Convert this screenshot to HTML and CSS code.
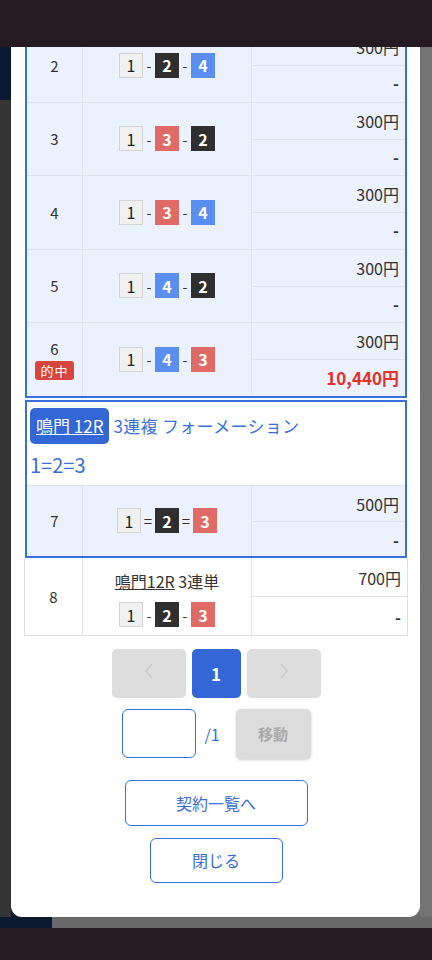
FILE: index.html
```html
<!DOCTYPE html>
<html lang="ja">

<head>
    <meta charset="utf-8">
    <meta name="viewport" content="width=device-width, initial-scale=1.0">
    <title>購入内容</title>
    <link rel="stylesheet" href="styles.css">
</head>

<body>

    <div class="statusbar"></div>

    <main class="stage">
        <div class="side side-left"></div>

        <section class="modal">
            <div class="scroll">

                <div class="group group-top">
                    <div class="row">
                        <div class="cell no">2</div>
                        <div class="cell combo">
                            <div class="nums"><span class="n n1">1</span><span class="sep">-</span><span class="n n2">2</span><span class="sep">-</span><span class="n n4">4</span></div>
                        </div>
                        <div class="cell money">
                            <div class="amt">300円</div>
                            <div class="pay">-</div>
                        </div>
                    </div>
                    <div class="row">
                        <div class="cell no">3</div>
                        <div class="cell combo">
                            <div class="nums"><span class="n n1">1</span><span class="sep">-</span><span class="n n3">3</span><span class="sep">-</span><span class="n n2">2</span></div>
                        </div>
                        <div class="cell money">
                            <div class="amt">300円</div>
                            <div class="pay">-</div>
                        </div>
                    </div>
                    <div class="row">
                        <div class="cell no">4</div>
                        <div class="cell combo">
                            <div class="nums"><span class="n n1">1</span><span class="sep">-</span><span class="n n3">3</span><span class="sep">-</span><span class="n n4">4</span></div>
                        </div>
                        <div class="cell money">
                            <div class="amt">300円</div>
                            <div class="pay">-</div>
                        </div>
                    </div>
                    <div class="row">
                        <div class="cell no">5</div>
                        <div class="cell combo">
                            <div class="nums"><span class="n n1">1</span><span class="sep">-</span><span class="n n4">4</span><span class="sep">-</span><span class="n n2">2</span></div>
                        </div>
                        <div class="cell money">
                            <div class="amt">300円</div>
                            <div class="pay">-</div>
                        </div>
                    </div>
                    <div class="row">
                        <div class="cell no">
                            <span>6</span>
                            <span class="hit">的中</span>
                        </div>
                        <div class="cell combo">
                            <div class="nums"><span class="n n1">1</span><span class="sep">-</span><span class="n n4">4</span><span class="sep">-</span><span class="n n3">3</span></div>
                        </div>
                        <div class="cell money">
                            <div class="amt">300円</div>
                            <div class="pay win">10,440円</div>
                        </div>
                    </div>
                </div>

                <div class="group group-form">
                    <div class="form-head">
                        <div class="head-line">
                            <a class="race-tag">鳴門 12R</a>
                            <span class="bet-type">3連複 フォーメーション</span>
                        </div>
                        <div class="form-nums">1=2=3</div>
                    </div>
                    <div class="row row-7">
                        <div class="cell no">7</div>
                        <div class="cell combo">
                            <div class="nums"><span class="n n1">1</span><span class="sep eq">=</span><span class="n n2">2</span><span class="sep eq">=</span><span class="n n3">3</span></div>
                        </div>
                        <div class="cell money">
                            <div class="amt">500円</div>
                            <div class="pay">-</div>
                        </div>
                    </div>
                </div>

                <div class="row row-plain">
                    <div class="cell no">8</div>
                    <div class="cell combo">
                        <div class="race-name"><u>鳴門12R</u> 3連単</div>
                        <div class="nums"><span class="n n1">1</span><span class="sep">-</span><span class="n n2">2</span><span class="sep">-</span><span class="n n3">3</span></div>
                    </div>
                    <div class="cell money">
                        <div class="amt amt-tall">700円</div>
                        <div class="pay pay-tall">-</div>
                    </div>
                </div>

                <nav class="pager">
                    <button class="pg pg-arrow">
                        <svg width="10" height="18" viewBox="0 0 10 18"><polyline points="8,2 2,9 8,16" fill="none" stroke="#c9c9c9" stroke-width="1.4"/></svg>
                    </button>
                    <button class="pg pg-current">1</button>
                    <button class="pg pg-arrow">
                        <svg width="10" height="18" viewBox="0 0 10 18"><polyline points="2,2 8,9 2,16" fill="none" stroke="#c9c9c9" stroke-width="1.4"/></svg>
                    </button>
                </nav>

                <div class="jump">
                    <input class="jump-input" type="text">
                    <span class="jump-total">/1</span>
                    <button class="jump-btn">移動</button>
                </div>

                <div class="actions">
                    <button class="btn-outline btn-list">契約一覧へ</button>
                    <button class="btn-outline btn-close">閉じる</button>
                </div>

            </div>
        </section>

        <div class="side side-right"></div>
    </main>

    <div class="navbar"></div>

</body>

</html>
```

FILE: styles.css
```css
* {
    box-sizing: border-box;
}

body {
    margin: 0;
    font-family: "Noto Sans CJK JP", "Noto Sans", sans-serif;
    color: #333;
    background: #241b22;
}

.statusbar {
    height: 47px;
    background: #241b22;
}

.navbar {
    height: 32px;
    background: #241b22;
}

.stage {
    display: grid;
    grid-template-columns: 11px 409px 12px;
    height: 881px;
    background: linear-gradient(to right, #0b1a31 52px, #6a6a6a 52px);
}

.side-left {
    background: linear-gradient(#0b1a31 53px, #353535 53px);
    height: 870px;
}

.side-right {
    background: #747474;
    height: 870px;
}

.modal {
    height: 870px;
    background: #fff;
    border-radius: 0 0 11px 11px;
    overflow: hidden;
}

.scroll {
    padding: 0 12px 0 13px;
}

/* table groups */

.group {
    border: 2px solid #3a6ed8;
    margin: 0 1px;
}

.group-top {
    margin-top: -20px;
}

.group-form {
    margin-top: 2px;
    background: #fff;
}

.row {
    display: grid;
    grid-template-columns: 56px 169px 1fr;
    background: #ebf1fd;
    border-bottom: 1px solid #e1e4ea;
}

.group .row:last-child {
    border-bottom: none;
}

.cell {
    border-right: 1px solid #e1e4ea;
}

.cell:last-child {
    border-right: none;
}

.no {
    display: flex;
    flex-direction: column;
    align-items: center;
    justify-content: center;
    font-size: 15px;
    color: #333;
}

.hit {
    margin-top: 2px;
    padding: 0 5px;
    background: #d8443e;
    color: #fff;
    font-size: 13px;
    line-height: 19px;
    border-radius: 3px;
    letter-spacing: 1px;
}

.combo {
    display: flex;
    flex-direction: column;
    align-items: center;
    justify-content: center;
}

.nums {
    display: flex;
    align-items: center;
}

.n {
    width: 24px;
    height: 25px;
    display: flex;
    align-items: center;
    justify-content: center;
    font-size: 16px;
    font-weight: bold;
    color: #fff;
}

.n1 {
    background: #f1f1f1;
    border: 1px solid #d4d4d4;
    color: #222;
    font-weight: normal;
}

.n2 {
    background: #2f2f2f;
}

.n3 {
    background: #e06a66;
}

.n4 {
    background: #5a8ef0;
}

.sep {
    width: 12px;
    text-align: center;
    font-size: 14px;
    color: #333;
}

.sep.eq {
    width: 14px;
    font-size: 15px;
}

.money {
    display: flex;
    flex-direction: column;
    font-size: 16px;
    color: #333;
    text-align: right;
}

.amt {
    height: 37px;
    line-height: 36px;
    padding-right: 6px;
    border-bottom: 1px solid #e1e4ea;
}

.pay {
    height: 35.5px;
    line-height: 35px;
    padding-right: 6px;
    font-weight: bold;
}

.pay.win {
    color: #e8302a;
    font-size: 17px;
}

/* formation block */

.form-head {
    padding: 6px 0 0 3px;
    height: 84px;
    border-bottom: 1px solid #e1e4ea;
}

.head-line {
    display: flex;
    align-items: center;
    gap: 4px;
}

.race-tag {
    display: inline-block;
    height: 36px;
    line-height: 36px;
    padding: 0 6px;
    background: #3467d6;
    color: #fff;
    font-size: 17px;
    text-decoration: underline;
    border-radius: 5px;
}

.bet-type {
    color: #3a6ed8;
    font-size: 17px;
    letter-spacing: 0.3px;
}

.form-nums {
    margin-top: 6px;
    color: #3a6ed8;
    font-size: 20px;
}

.row-7 .amt {
    height: 36px;
}

.row-7 .pay {
    height: 34px;
    line-height: 36px;
}

.row-plain {
    grid-template-columns: 58px 169px 1fr;
    background: #fff;
    border: 1px solid #e1e1e1;
    border-top: none;
}

.row-plain .combo {
    gap: 9px;
    padding-top: 4px;
}

.race-name {
    font-size: 16px;
    color: #333;
}

.amt-tall {
    height: 39px;
    line-height: 40px;
}

.pay-tall {
    height: 38px;
    line-height: 40px;
}

/* pager */

.pager {
    display: flex;
    justify-content: center;
    gap: 6px;
    margin-top: 13px;
}

.pg {
    height: 49px;
    border: none;
    border-radius: 5px;
    font-family: inherit;
}

.pg-arrow {
    width: 74px;
    background: #dddddd;
}

.pg-current {
    width: 49px;
    background: #3366d6;
    color: #fff;
    font-size: 17px;
    font-weight: bold;
}

.jump {
    display: flex;
    justify-content: center;
    align-items: center;
    margin-top: 11px;
    padding-left: 1px;
}

.jump-input {
    width: 74px;
    height: 49px;
    border: 1.5px solid #3a6ed8;
    border-radius: 6px;
}

.jump-total {
    margin: 0 16px 0 8px;
    color: #3a6ed8;
    font-size: 16px;
}

.jump-btn {
    width: 75px;
    height: 50px;
    border: none;
    border-radius: 5px;
    background: #dcdcdc;
    color: #a8a8a8;
    font-family: inherit;
    font-size: 15px;
    font-weight: bold;
    box-shadow: 0 1px 3px rgba(0, 0, 0, .18);
}

.actions {
    display: flex;
    flex-direction: column;
    align-items: center;
    gap: 12px;
    margin-top: 21px;
}

.btn-outline {
    background: #fff;
    border: 1.5px solid #3a6ed8;
    border-radius: 6px;
    color: #3a6ed8;
    font-family: inherit;
    font-size: 16px;
}

.btn-list {
    width: 183px;
    height: 46px;
}

.btn-close {
    width: 133px;
    height: 45px;
}
```
